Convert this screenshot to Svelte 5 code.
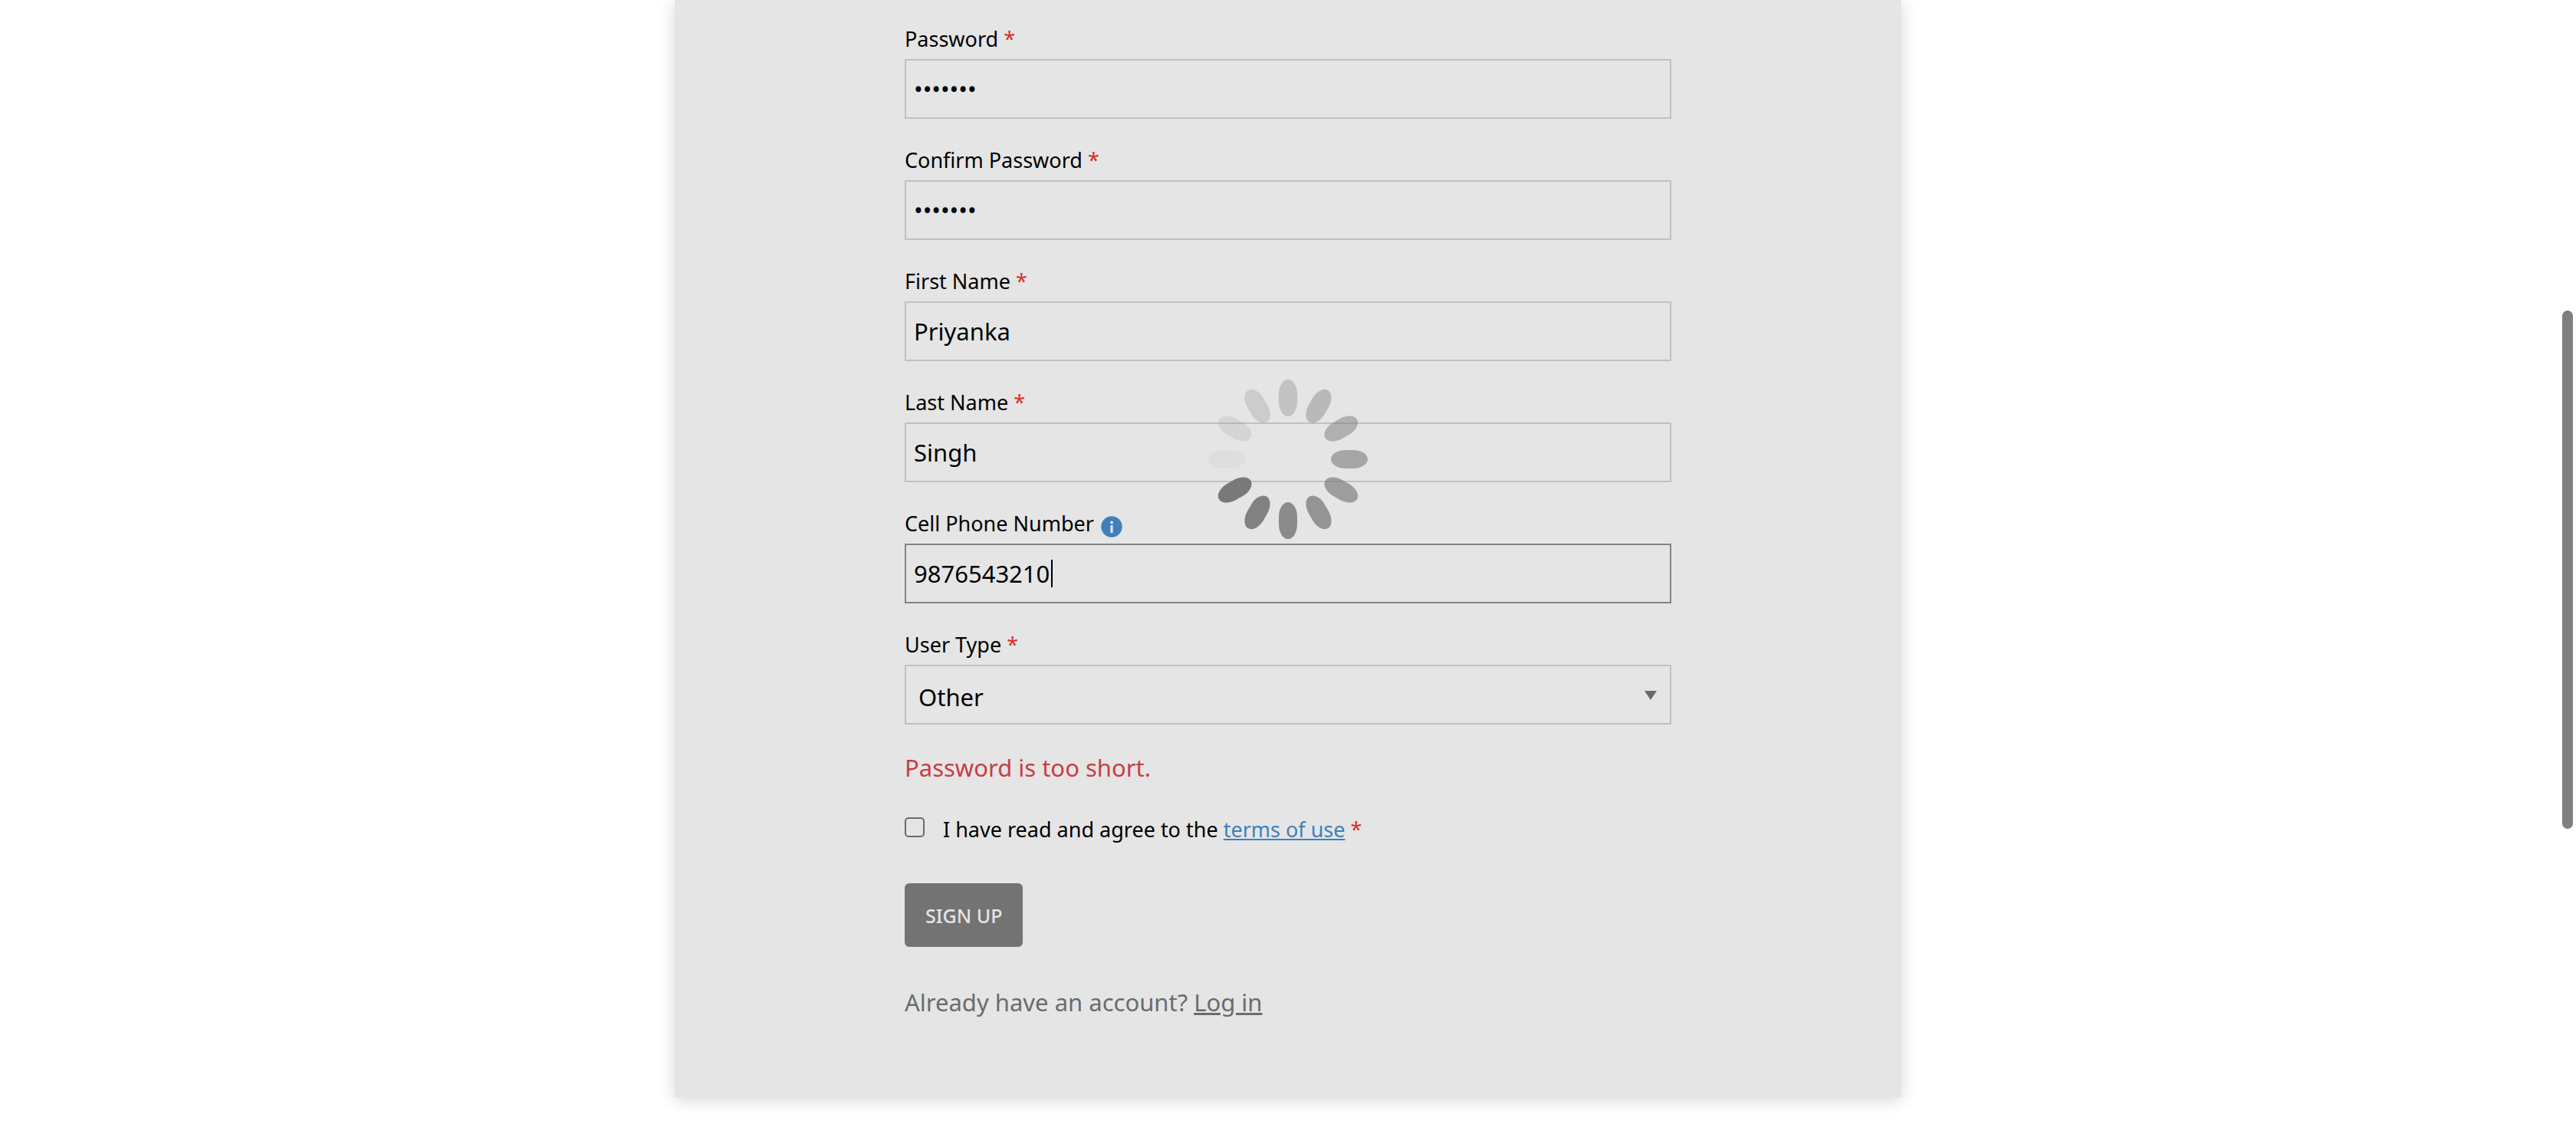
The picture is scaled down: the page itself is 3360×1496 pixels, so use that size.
<script>
  let password = $state('secret1');
  let confirmPassword = $state('secret1');
  let firstName = $state('Priyanka');
  let lastName = $state('Singh');
  let phone = $state('9876543210');
  let userType = $state('Other');
  let agreed = $state(false);

  // Spokes run clockwise, starting from the faintest one on the left.
  const spokes = Array.from({ length: 12 }, (_, i) => ({
    angle: 270 + i * 30,
    opacity: 0.06 + i * 0.083
  }));
</script>

<main class="page">
  <form class="card" onsubmit={(e) => e.preventDefault()}>
    <div class="field">
      <label for="password">Password <span class="required">*</span></label>
      <input id="password" class="box" type="password" bind:value={password} />
    </div>
    <div class="field">
      <label for="confirm">Confirm Password <span class="required">*</span></label>
      <input id="confirm" class="box" type="password" bind:value={confirmPassword} />
    </div>
    <div class="field">
      <label for="first">First Name <span class="required">*</span></label>
      <input id="first" class="box" type="text" bind:value={firstName} />
    </div>
    <div class="field">
      <label for="last">Last Name <span class="required">*</span></label>
      <input id="last" class="box" type="text" bind:value={lastName} />
    </div>
    <div class="field">
      <div class="label-row">
        <label for="phone">Cell Phone Number</label>
        <svg class="info" viewBox="0 0 28 28" aria-hidden="true">
          <circle cx="14" cy="14" r="13.7" fill="#3f80bb" />
          <circle cx="14" cy="8.4" r="1.9" fill="#e5e5e5" />
          <rect x="12.4" y="12" width="3.2" height="10" rx="0.6" fill="#e5e5e5" />
        </svg>
      </div>
      <div class="control">
        <input id="phone" class="box active" type="tel" bind:value={phone} />
        <span class="caret"></span>
      </div>
    </div>
    <div class="field">
      <label for="type">User Type <span class="required">*</span></label>
      <div class="control">
        <select id="type" class="box" bind:value={userType}>
          <option>Other</option>
        </select>
        <svg class="arrow" viewBox="0 0 16 12" aria-hidden="true">
          <path d="M0 0H16L8 12Z" fill="#696969" />
        </svg>
      </div>
    </div>

    <p class="error">Password is too short.</p>

    <div class="terms">
      <input id="agree" type="checkbox" bind:checked={agreed} />
      <label for="agree">I have read and agree to the <a href="#terms">terms of use</a> <span class="required">*</span></label>
    </div>

    <button type="submit">SIGN UP</button>

    <p class="login">Already have an account? <a href="#login">Log in</a></p>
  </form>
</main>

<svg class="spinner" viewBox="0 0 100 100" aria-hidden="true">
  {#each spokes as s}
    <rect
      x="47" y="24" width="6" height="12" rx="3" ry="4.8"
      fill="#757575" opacity={s.opacity} transform="rotate({s.angle} 50 50)"
    />
  {/each}
</svg>
<div class="scroll-thumb"></div>

<style>
  :global(body) {
    background: #fff;
    font-family: 'Noto Sans', 'Open Sans', sans-serif;
    font-size: 27px;
    line-height: 36px;
    color: #000;
  }
  .page {
    display: flex;
    justify-content: center;
    align-items: flex-start;
    min-height: 100vh;
  }
  .card {
    box-sizing: border-box;
    width: 100%;
    max-width: 1600px;
    padding: 33px 300px 104px;
    background: #e5e5e5;
    box-shadow: 0 4px 20px rgba(0, 0, 0, 0.16);
    display: flex;
    flex-direction: column;
  }
  .field {
    display: flex;
    flex-direction: column;
    gap: 8px;
    margin-bottom: 36px;
  }
  .label-row {
    display: flex;
    align-items: flex-end;
    gap: 9px;
  }
  .required {
    color: #d93025;
  }
  .info {
    width: 28px;
    height: 28px;
  }
  .control {
    position: relative;
    display: flex;
  }
  .box {
    box-sizing: border-box;
    width: 100%;
    height: 78px;
    margin: 0;
    padding: 0 10px;
    border: 2px solid #c1c1c1;
    border-radius: 0;
    outline: none;
    background: transparent;
    color: #000;
    font-family: inherit;
    font-size: 31px;
  }
  .box.active {
    border-color: #838383;
  }
  select.box {
    appearance: none;
    padding: 6px 16px 0;
  }
  .caret {
    position: absolute;
    left: 191px;
    top: 21px;
    width: 2px;
    height: 36px;
    background: #000;
  }
  .arrow {
    position: absolute;
    right: 19px;
    top: 34px;
    width: 16px;
    height: 12px;
    pointer-events: none;
  }
  .error,
  .login {
    margin: 0;
    font-size: 31px;
    line-height: 40px;
  }
  .error {
    color: #c73e45;
  }
  .terms {
    display: flex;
    align-items: flex-start;
    gap: 24px;
    margin: 43px 0 52px;
  }
  .terms input {
    appearance: none;
    box-sizing: border-box;
    width: 26px;
    height: 26px;
    margin: 2px 0 0;
    border: 2px solid #6a6a6a;
    border-radius: 5px;
  }
  .terms a {
    color: #3f80bb;
  }
  button {
    align-self: flex-start;
    height: 83px;
    margin-bottom: 52px;
    padding: 0 27px;
    border: 0;
    border-radius: 6px;
    background: #737373;
    color: #e5e5e5;
    font-family: inherit;
    font-size: 25px;
    font-weight: 500;
  }
  .login,
  .login a {
    color: #6b6b6b;
  }
  .spinner {
    position: fixed;
    left: 50%;
    top: 40%;
    width: 400px;
    height: 400px;
    margin: -199px 0 0 -200px;
    pointer-events: none;
  }
  .scroll-thumb {
    position: fixed;
    right: 4px;
    top: 405px;
    bottom: 415px;
    width: 14px;
    border-radius: 7px;
    background: #7f7f7f;
  }
</style>
